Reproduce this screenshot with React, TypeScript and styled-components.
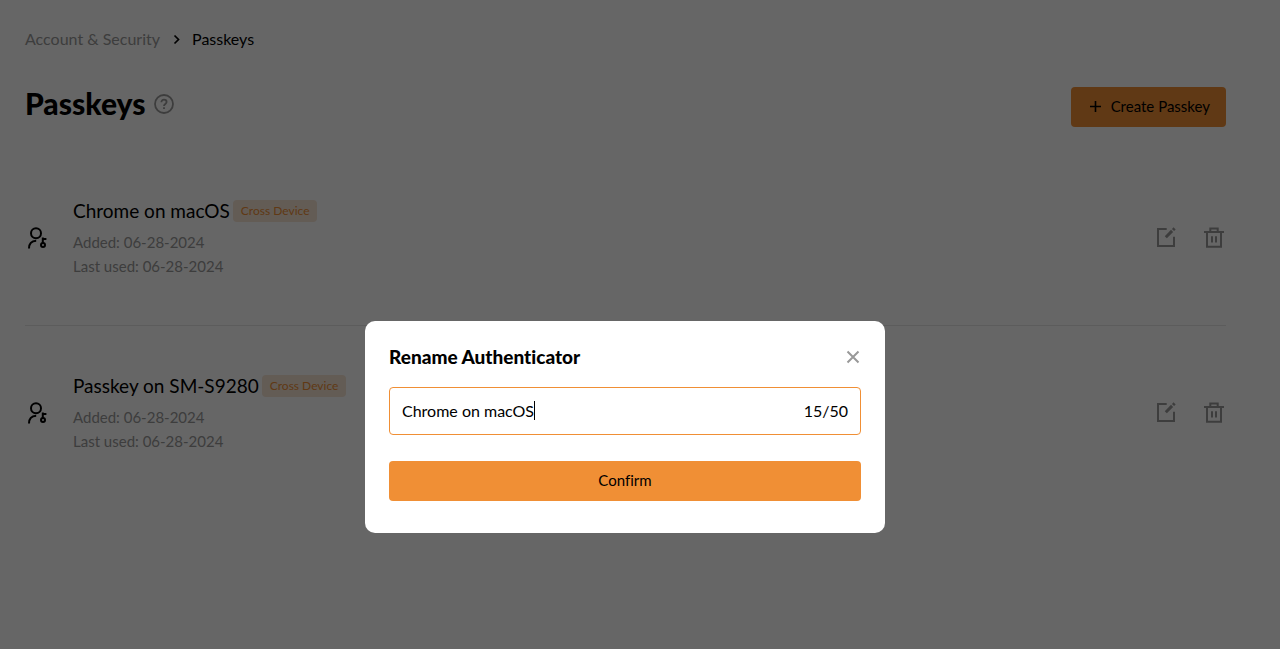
import React, { useState } from "react";
import styled, { createGlobalStyle } from "styled-components";

const GlobalStyle = createGlobalStyle`
  *, *::before, *::after { box-sizing: border-box; }
  body {
    margin: 0;
    background: #fff;
    color: #000;
    font-family: Lato, "Noto Sans", sans-serif;
    font-size: 16px;
    font-variant-ligatures: none;
  }
  h1, h2, p, ul { margin: 0; padding: 0; }
  svg { display: block; flex: none; }
`;

const orange = "#f08f35";
const muted = "#999";

const Page = styled.main`
  min-height: 100vh;
  padding: 27px 54px 0 25px;
`;

const Breadcrumb = styled.nav`
  display: flex;
  align-items: center;
  gap: 8px;
  line-height: 24px;
`;

const CrumbLink = styled.a`
  color: ${muted};
  text-decoration: none;
`;

const Header = styled.header`
  display: flex;
  justify-content: space-between;
  margin-top: 36px;
`;

const TitleGroup = styled.div`
  display: flex;
  align-items: center;
  gap: 9px;
  height: 34px;
`;

const Title = styled.h1`
  font-size: 30px;
  font-weight: 900;
  line-height: 32px;
  padding-bottom: 2px;
`;

const PrimaryButton = styled.button<{ $block?: boolean }>`
  display: flex;
  align-items: center;
  justify-content: center;
  gap: 8px;
  width: ${(p) => (p.$block ? "100%" : "auto")};
  height: 40px;
  padding: 0 16px 2px;
  border: 0;
  border-radius: 4px;
  background: ${orange};
  color: #000;
  font: inherit;
  font-size: 15px;
`;

const IconButton = styled.button`
  display: block;
  padding: 0;
  border: 0;
  background: none;
  color: ${muted};
`;

const List = styled.ul`
  margin-top: 24px;
  list-style: none;
`;

const Item = styled.li`
  display: flex;
  align-items: center;
  height: 175px;
  border-bottom: 1px solid #e6e6e6;
  &:last-child { border-color: transparent; }
`;

const Details = styled.div`
  flex: 1;
  margin-left: 24px;
  padding-top: 2px;
`;

const NameLine = styled.div`
  display: flex;
  align-items: center;
  gap: 3px;
  margin-bottom: 8px;
  font-size: 19px;
  line-height: 22px;
`;

const Tag = styled.span`
  padding: 0 8px;
  border-radius: 4px;
  background: #f7e6d4;
  color: ${orange};
  font-size: 12px;
  line-height: 22px;
`;

const Meta = styled.p`
  color: ${muted};
  font-size: 15px;
  line-height: 24px;
`;

const Actions = styled.div`
  display: flex;
  gap: 24px;
`;

const Overlay = styled.div`
  position: fixed;
  inset: 0;
  display: flex;
  align-items: flex-start;
  justify-content: center;
  padding: 321px 30px 0 0;
  background: rgba(0, 0, 0, 0.6);
`;

const Dialog = styled.section`
  width: 520px;
  max-width: 100%;
  padding: 24px 24px 32px;
  border-radius: 10px;
  background: #fff;
`;

const DialogHeader = styled.div`
  display: flex;
  align-items: center;
  justify-content: space-between;
  height: 24px;
`;

const DialogTitle = styled.h2`
  font-size: 19px;
  font-weight: 900;
  line-height: 24px;
`;

const Field = styled.label`
  display: flex;
  align-items: center;
  height: 48px;
  margin: 18px 0 26px;
  padding: 0 12px 2px;
  border: 1px solid ${orange};
  border-radius: 4px;
`;

const NameInput = styled.input`
  field-sizing: content;
  min-width: 0;
  padding: 0;
  border: 0;
  outline: 0;
  background: none;
  color: #000;
  caret-color: transparent;
  font: inherit;
`;

const Caret = styled.span`
  width: 1px;
  height: 19px;
  background: #000;
`;

const Counter = styled.span`
  margin-left: auto;
`;

const PasskeyIcon = () => (
  <svg width="24" height="24" viewBox="0 0 24 24" fill="none" stroke="currentColor" strokeWidth="2">
    <circle cx="11" cy="7.3" r="5" />
    <path d="M4 22.5c0-4.6 2.6-7.6 7.2-7.8" />
    <circle cx="18" cy="19" r="2" />
    <path d="M17.8 17v-5.5M17.8 13h3.6" />
  </svg>
);

const EditIcon = () => (
  <svg width="24" height="24" viewBox="0 0 24 24" fill="none" stroke="currentColor" strokeWidth="2">
    <path d="M12.7 3H4v17h16v-9.3" />
    <path d="M11.8 11.2l6.3-6.3" strokeWidth="3" />
    <path d="M19 4l1.6-1.6" strokeWidth="3" />
  </svg>
);

const TrashIcon = () => (
  <svg width="24" height="24" viewBox="0 0 24 24" fill="none" stroke="currentColor" strokeWidth="2">
    <path d="M2 6h20M5 6v14.7h14V6M8.3 6V2.4h7.4V6M10 10.3v6.2M14 10.3v6.2" />
  </svg>
);

const HelpIcon = () => (
  <svg width="20" height="20" viewBox="0 0 20 20" fill="none" stroke="currentColor" strokeWidth="1.8">
    <circle cx="10" cy="10" r="9" />
    <path d="M7.4 8.2c0-1.6 1.1-2.6 2.6-2.6s2.6 1 2.6 2.4c0 1.9-2.6 2-2.6 4" />
    <path d="M10 13.2v1.8" />
  </svg>
);

const PlusIcon = () => (
  <svg width="16" height="16" viewBox="0 0 16 16" fill="none" stroke="currentColor" strokeWidth="1.6">
    <path d="M8.5 3v11M3 8.5h11" />
  </svg>
);

const CloseIcon = () => (
  <svg width="16" height="16" viewBox="0 0 16 16" fill="none" stroke="currentColor" strokeWidth="2">
    <path d="M2.5 2.5l11 11M13.5 2.5l-11 11" />
  </svg>
);

const ChevronIcon = () => (
  <svg width="16" height="16" viewBox="0 0 16 16" fill="none" stroke="currentColor" strokeWidth="1.7">
    <path d="M6.5 4.5l4 4-4 4" />
  </svg>
);

const passkeys = [
  { name: "Chrome on macOS", tag: "Cross Device", added: "06-28-2024", used: "06-28-2024" },
  { name: "Passkey on SM-S9280", tag: "Cross Device", added: "06-28-2024", used: "06-28-2024" },
];

export default function App() {
  const [name, setName] = useState("Chrome on macOS");
  return (
    <>
      <GlobalStyle />
      <Page>
        <Breadcrumb aria-label="Breadcrumb">
          <CrumbLink href="#">Account &amp; Security</CrumbLink>
          <ChevronIcon />
          <span>Passkeys</span>
        </Breadcrumb>
        <Header>
          <TitleGroup>
            <Title>Passkeys</Title>
            <IconButton type="button" aria-label="Help">
              <HelpIcon />
            </IconButton>
          </TitleGroup>
          <PrimaryButton type="button">
            <PlusIcon />
            Create Passkey
          </PrimaryButton>
        </Header>
        <List>
          {passkeys.map((p) => (
            <Item key={p.name}>
              <PasskeyIcon />
              <Details>
                <NameLine>
                  <span>{p.name}</span>
                  <Tag>{p.tag}</Tag>
                </NameLine>
                <Meta>Added: {p.added}</Meta>
                <Meta>Last used: {p.used}</Meta>
              </Details>
              <Actions>
                <IconButton type="button" aria-label="Rename">
                  <EditIcon />
                </IconButton>
                <IconButton type="button" aria-label="Delete">
                  <TrashIcon />
                </IconButton>
              </Actions>
            </Item>
          ))}
        </List>
      </Page>
      <Overlay>
        <Dialog role="dialog" aria-modal="true" aria-labelledby="rename-title">
          <DialogHeader>
            <DialogTitle id="rename-title">Rename Authenticator</DialogTitle>
            <IconButton type="button" aria-label="Close">
              <CloseIcon />
            </IconButton>
          </DialogHeader>
          <Field>
            <NameInput
              aria-label="Authenticator name"
              maxLength={50}
              value={name}
              onChange={(e) => setName(e.target.value)}
            />
            <Caret />
            <Counter>{name.length}/50</Counter>
          </Field>
          <PrimaryButton type="button" $block>
            Confirm
          </PrimaryButton>
        </Dialog>
      </Overlay>
    </>
  );
}
